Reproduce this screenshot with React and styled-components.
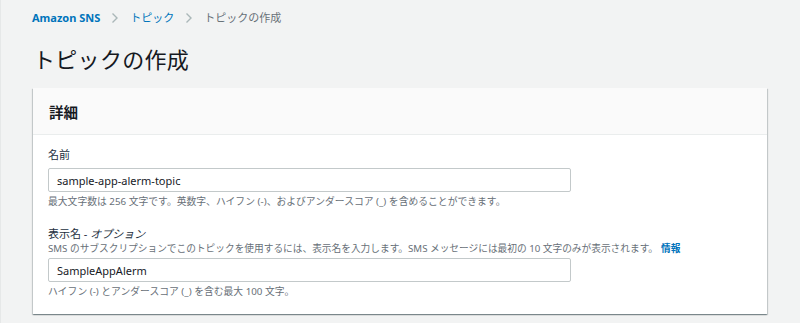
import React from "react";
import styled, { createGlobalStyle } from "styled-components";

const Global = createGlobalStyle`
  html, body { margin: 0; padding: 0; }
  body {
    background: #f2f3f3;
    font-family: "Noto Sans", "Noto Sans CJK JP", sans-serif;
    color: #16191f;
  }
`;

const Page = styled.div`
  min-height: 323px;
  box-sizing: border-box;
  padding: 0 33px 0 32px;
  border-left: 1px solid #e6e8e8;
`;

const Breadcrumbs = styled.nav`
  display: flex;
  align-items: center;
  height: 36px;
  gap: 11px;
  margin-left: -1px;
  font-size: 11px;
`;

const Crumb = styled.span`
  color: ${(p) => (p.$current ? "#687078" : "#0073bb")};
  font-weight: ${(p) => (p.$bold ? 700 : 400)};
  line-height: 14px;
`;

const Chevron = () => (
  <svg width="8" height="12" viewBox="0 0 8 12" fill="none">
    <path d="M1.5 1.5L6 6L1.5 10.5" stroke="#aab7b8" strokeWidth="1.4" />
  </svg>
);

const Title = styled.h1`
  margin: 8px 0 0 0;
  font-size: 22px;
  font-weight: 400;
  line-height: 30px;
  color: #16191f;
  letter-spacing: 0.3px;
`;

const Card = styled.section`
  margin-top: 14px;
  background: #fff;
  box-shadow: 0 1px 1px 0 rgba(0, 28, 36, 0.3), 1px 1px 1px 0 rgba(0, 28, 36, 0.15),
    -1px 1px 1px 0 rgba(0, 28, 36, 0.15);
`;

const CardHeader = styled.header`
  height: 46px;
  display: flex;
  align-items: center;
  padding: 0 16px;
  background: #fafafa;
  border-bottom: 1px solid #eaeded;
`;

const CardTitle = styled.h2`
  margin: 0;
  font-size: 14.5px;
  font-weight: 700;
  color: #16191f;
`;

const CardBody = styled.div`
  padding: 12px 15px 15px 15px;
  display: flex;
  flex-direction: column;
`;

const Field = styled.div`
  display: flex;
  flex-direction: column;
  & + & { margin-top: 17px; }
`;

const Label = styled.label`
  font-size: 11px;
  line-height: 16px;
  color: #232f3e;
  margin-bottom: ${(p) => (p.$tight ? 0 : 5)}px;
`;

const Optional = styled.i`
  font-style: italic;
`;

const Description = styled.div`
  font-size: 9.7px;
  line-height: 13px;
  color: #687078;
  margin-bottom: 3px;
`;

const InfoLink = styled.a`
  color: #0073bb;
  font-weight: 700;
  text-decoration: none;
  margin-left: 3px;
`;

const Input = styled.div`
  width: 523px;
  height: 24px;
  box-sizing: border-box;
  border: 1px solid #c3c9ca;
  border-radius: 2px;
  background: #fff;
  padding: 0 8px;
  display: flex;
  align-items: center;
  font-size: 11px;
  color: #16191f;
`;

const Hint = styled.div`
  margin-top: 3px;
  font-size: 9.8px;
  line-height: 14px;
  color: #687078;
`;

export default function App() {
  return (
    <>
      <Global />
      <Page>
        <Breadcrumbs>
          <Crumb $bold>Amazon SNS</Crumb>
          <Chevron />
          <Crumb>トピック</Crumb>
          <Chevron />
          <Crumb $current>トピックの作成</Crumb>
        </Breadcrumbs>
        <Title>トピックの作成</Title>
        <Card>
          <CardHeader>
            <CardTitle>詳細</CardTitle>
          </CardHeader>
          <CardBody>
            <Field>
              <Label>名前</Label>
              <Input>sample-app-alerm-topic</Input>
              <Hint>
                最大文字数は 256 文字です。英数字、ハイフン (-)、およびアンダースコア (_) を含めることができます。
              </Hint>
            </Field>
            <Field>
              <Label $tight>
                表示名 - <Optional>オプション</Optional>
              </Label>
              <Description>
                SMS のサブスクリプションでこのトピックを使用するには、表示名を入力します。SMS メッセージには最初の 10 文字のみが表示されます。
                <InfoLink href="#">情報</InfoLink>
              </Description>
              <Input>SampleAppAlerm</Input>
              <Hint>ハイフン (-) とアンダースコア (_) を含む最大 100 文字。</Hint>
            </Field>
          </CardBody>
        </Card>
      </Page>
    </>
  );
}
